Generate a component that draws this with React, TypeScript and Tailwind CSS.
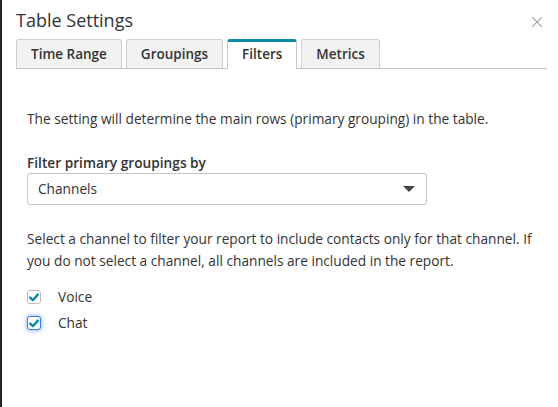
import { X } from 'lucide-react';

const tabs = ['Time Range', 'Groupings', 'Filters', 'Metrics'];

function Tick() {
  return (
    <svg width="10" height="9" viewBox="0 0 10 9">
      <path d="M1.2 4.6 L3.9 7.2 L8.8 1.6" fill="none" stroke="#0a8ba3" strokeWidth="2.4" strokeLinecap="round" strokeLinejoin="round" />
    </svg>
  );
}

export default function App() {
  return (
    <div
      className="h-[407px] w-[558px] border-l-2 border-[#232323] bg-white text-[13.7px] text-[#333]"
      style={{ fontFamily: '"Open Sans", "Noto Sans", Arial, sans-serif' }}
    >
      <div className="flex items-start justify-between pl-[14px] pr-[14px] pt-[8px]">
        <h1 className="text-[18px] leading-[24px]">Table Settings</h1>
        <X className="mr-[-2px] mt-[5px] h-[18px] w-[18px] text-[#8c8c8c]" strokeWidth={1.4} />
      </div>

      <div className="ml-[14px] mr-[11px] mt-[7px] flex items-end gap-[4px] border-b border-[#c6c6c6]">
        {tabs.map((tab) => {
          const active = tab === 'Filters';
          return (
            <div
              key={tab}
              className={
                active
                  ? '-mb-px h-[30px] rounded-t-[3px] border border-b-0 border-[#c6c6c6] border-t-[3px] border-t-[#0a8ba3] bg-white px-[14px] text-[13.5px] font-semibold leading-[25px]'
                  : 'h-[29px] rounded-t-[3px] border border-b-0 border-[#cfcfcf] bg-[#f2f2f2] px-[14px] text-[13.5px] font-semibold leading-[28px]'
              }
            >
              {tab}
            </div>
          );
        })}
      </div>

      <div className="px-[25px] pt-[40px]">
        <p className="leading-[20px]">
          The setting will determine the main rows (primary grouping) in the table.
        </p>

        <label className="mt-[24px] block font-semibold leading-[20px]">Filter primary groupings by</label>
        <div className="flex h-[32px] w-[400px] items-center justify-between rounded-[3px] border border-[#c6c6c6] px-[10px]">
          <span>Channels</span>
          <svg width="12" height="7" viewBox="0 0 12 7" className="mr-[1px]">
            <path d="M0 0 H12 L6 6 Z" fill="#444" />
          </svg>
        </div>

        <p className="mt-[23px] leading-[22px]">
          Select a channel to filter your report to include contacts only for that channel. If you do not select a
          channel, all channels are included in the report.
        </p>

        <div className="mt-[15px] flex flex-col gap-[6px]">
          <div className="flex items-center gap-[17px] leading-[20px]">
            <span className="flex h-[14px] w-[14px] items-center justify-center rounded-[3px] border border-[#b9b9b9] bg-white">
              <Tick />
            </span>
            <span>Voice</span>
          </div>
          <div className="flex items-center gap-[17px] leading-[20px]">
            <span className="flex h-[14px] w-[14px] items-center justify-center rounded-[3px] border border-[#2e7fe6] bg-white shadow-[0_0_4px_1px_rgba(46,127,230,0.45)]">
              <Tick />
            </span>
            <span>Chat</span>
          </div>
        </div>
      </div>
    </div>
  );
}
